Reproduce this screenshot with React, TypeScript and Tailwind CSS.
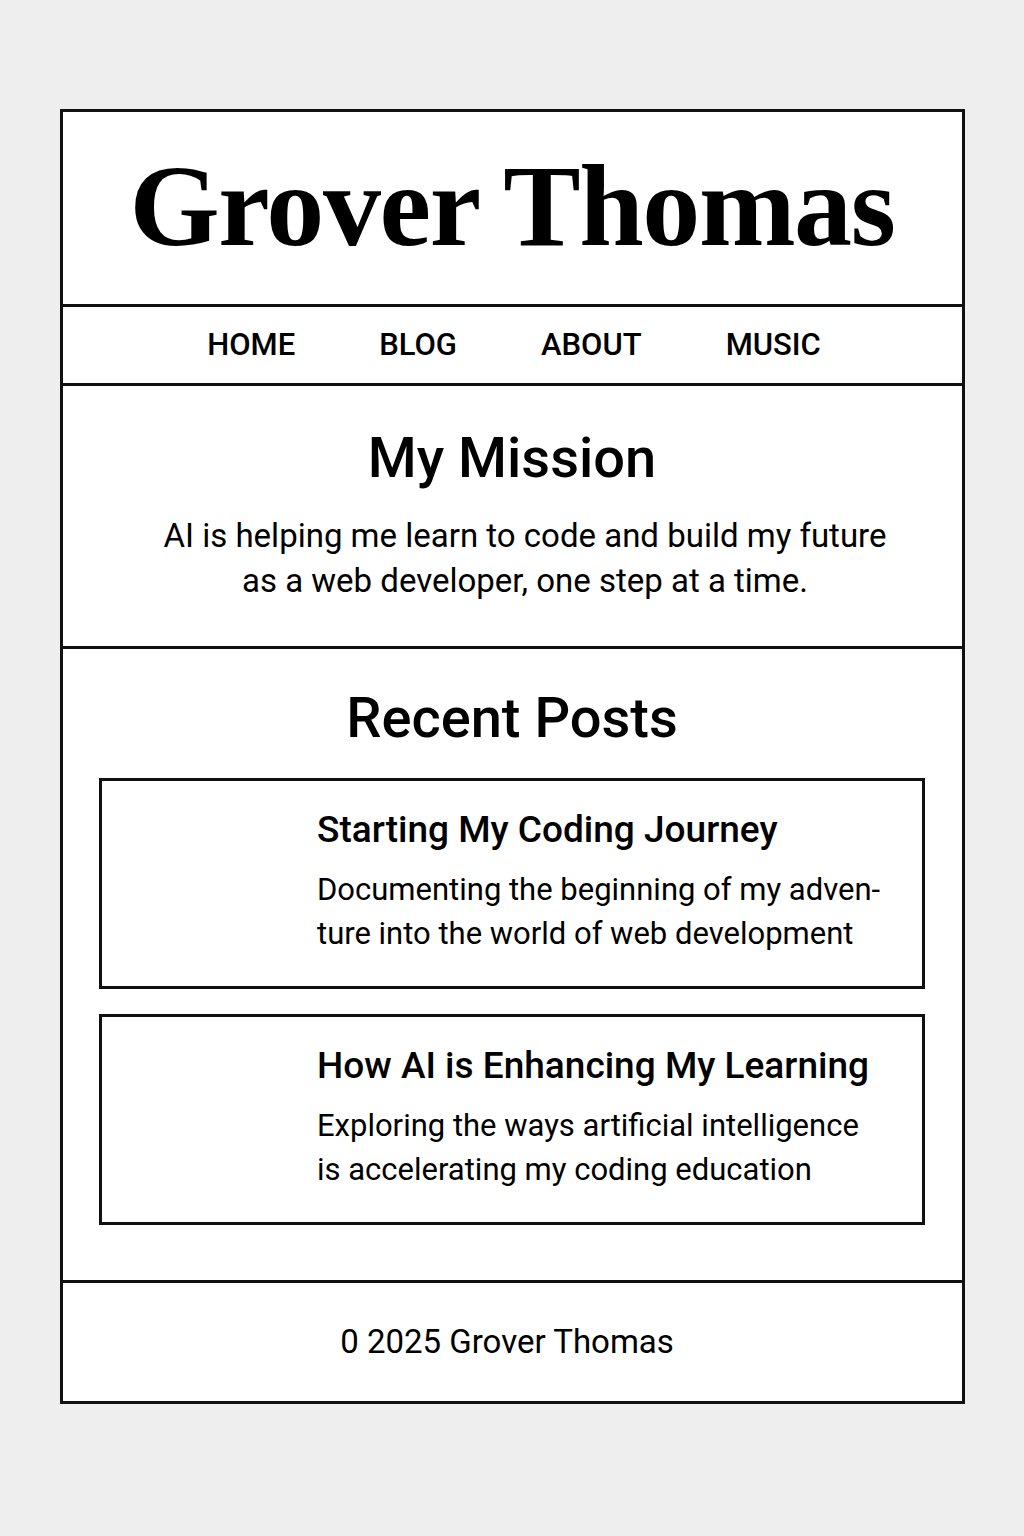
import React from "react";

const posts = [
  {
    title: "Starting My Coding Journey",
    body: ["Documenting the beginning of my adven-", "ture into the world of web development"],
  },
  {
    title: "How AI is Enhancing My Learning",
    body: ["Exploring the ways artificial intelligence", "is accelerating my coding education"],
  },
];

export default function App() {
  return (
    <div className="min-h-[1536px] bg-[#eeeeee] pt-[109px] font-['Roboto',sans-serif] text-black">
      <div className="mx-auto w-[905px] border-[3px] border-[#111] bg-white flex flex-col">
        <header className="h-[195px] flex items-center justify-center border-b-[3px] border-[#111]">
          <h1 className="font-['Liberation_Serif',serif] font-bold text-[116px] leading-none tracking-[-0.012em] pb-[4px]">
            Grover Thomas
          </h1>
        </header>
        <nav className="h-[79px] flex items-center justify-center gap-[84px] border-b-[3px] border-[#111] text-[31px] font-medium pl-[4px]">
          <span>HOME</span>
          <span>BLOG</span>
          <span>ABOUT</span>
          <span>MUSIC</span>
        </nav>
        <section className="h-[263px] flex flex-col items-center border-b-[3px] border-[#111] pt-[42px]">
          <h2 className="text-[56px] font-medium leading-[60px]">My Mission</h2>
          <p className="mt-[25px] pl-[26px] text-[33px] leading-[45px] text-center">
            AI is helping me learn to code and build my future
            <br />
            as a web developer, one step at a time.
          </p>
        </section>
        <section className="h-[634px] flex flex-col items-center border-b-[3px] border-[#111] pt-[39px]">
          <h2 className="text-[56px] font-medium leading-[60px]">Recent Posts</h2>
          <div className="mt-[30px] w-[826px] flex flex-col gap-[25px]">
            {posts.map((p) => (
              <div key={p.title} className="h-[211px] border-[3px] border-[#111] pl-[215px] pt-[27px]">
                <h3 className="text-[37px] font-medium leading-[44px]">{p.title}</h3>
                <p className="mt-[16px] text-[31px] leading-[44px]">
                  {p.body[0]}
                  <br />
                  {p.body[1]}
                </p>
              </div>
            ))}
          </div>
        </section>
        <footer className="h-[118px] flex items-center justify-center text-[33px] pr-[10px]">
          0 2025 Grover Thomas
        </footer>
      </div>
    </div>
  );
}
